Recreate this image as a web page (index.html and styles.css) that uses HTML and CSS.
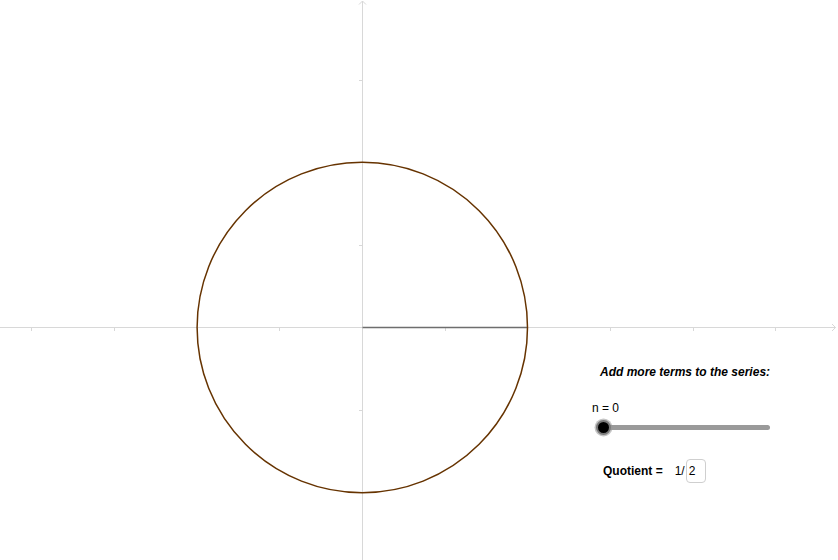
FILE: index.html
```html
<!DOCTYPE html>
<html>
<head>
<meta charset="utf-8">
<link rel="stylesheet" href="styles.css">
</head>
<body>
<div class="stage">
  <svg class="graph" width="838" height="560" viewBox="0 0 838 560" xmlns="http://www.w3.org/2000/svg">
    <g stroke="#d8d8d8" stroke-width="1" fill="none">
      <line x1="0" y1="327.5" x2="835.5" y2="327.5"/>
      <polyline points="832,324 835.5,327.5 832,331"/>
      <line x1="362.5" y1="1" x2="362.5" y2="560"/>
      <polyline points="359,4.5 362.5,1 366,4.5"/>
      <line x1="31.5" y1="327.5" x2="31.5" y2="331"/>
      <line x1="114.5" y1="327.5" x2="114.5" y2="331"/>
      <line x1="197.5" y1="327.5" x2="197.5" y2="331"/>
      <line x1="279.5" y1="327.5" x2="279.5" y2="331"/>
      <line x1="445.5" y1="327.5" x2="445.5" y2="331"/>
      <line x1="527.5" y1="327.5" x2="527.5" y2="331"/>
      <line x1="610.5" y1="327.5" x2="610.5" y2="331"/>
      <line x1="693.5" y1="327.5" x2="693.5" y2="331"/>
      <line x1="775.5" y1="327.5" x2="775.5" y2="331"/>
      <line x1="359" y1="80.5" x2="362.5" y2="80.5"/>
      <line x1="359" y1="162.5" x2="362.5" y2="162.5"/>
      <line x1="359" y1="245.5" x2="362.5" y2="245.5"/>
      <line x1="359" y1="410.5" x2="362.5" y2="410.5"/>
      <line x1="359" y1="492.5" x2="362.5" y2="492.5"/>
    </g>
    <line x1="362.5" y1="327.5" x2="527" y2="327.5" stroke="#6e6e6e" stroke-width="1.3"/>
    <circle cx="362.3" cy="327.5" r="165.2" fill="none" stroke="#663300" stroke-width="1.5"/>
  </svg>

  <div class="controls">
    <div class="title">Add more terms to the series:</div>
    <div class="nlabel">n = 0</div>
    <div class="slider">
      <div class="track"></div>
      <div class="knob"></div>
    </div>
    <div class="quotient">
      <span class="qlabel">Quotient =</span>
      <span class="frac">1/</span>
      <span class="inputbox">2</span>
    </div>
  </div>
</div>
</body>
</html>
```

FILE: styles.css
```css
html, body {
  margin: 0;
  padding: 0;
  background: #ffffff;
  overflow: hidden;
}

.stage {
  position: relative;
  width: 838px;
  height: 560px;
  font-family: "Liberation Sans", Arial, sans-serif;
  font-size: 12px;
  color: #000;
}

.graph {
  display: block;
}

.controls {
  position: absolute;
  left: 592px;
  top: 362px;
  width: 200px;
  display: flex;
  flex-direction: column;
}

.title {
  margin-left: 8px;
  line-height: 20px;
  height: 20px;
  font-weight: bold;
  font-style: italic;
  white-space: nowrap;
}

.nlabel {
  margin-top: 19px;
  line-height: 14px;
  height: 14px;
}

.slider {
  position: relative;
  margin-top: 3px;
  margin-left: 11px;
  width: 167px;
  height: 18px;
  display: flex;
  align-items: center;
}

.track {
  width: 100%;
  height: 5px;
  border-radius: 3px;
  background: #9a9a9a;
}

.knob {
  position: absolute;
  left: -9px;
  top: 0;
  width: 11px;
  height: 11px;
  border-radius: 50%;
  background: #000;
  border: 2.5px solid #7a7a7a;
  box-shadow: 0 0 0 1.5px rgba(150, 150, 150, 0.55);
  margin-top: 1.5px;
  margin-left: 1.5px;
  box-sizing: content-box;
}

.quotient {
  margin-top: 23px;
  margin-left: 11px;
  display: flex;
  align-items: center;
  height: 24px;
  line-height: 14px;
}

.qlabel {
  font-weight: bold;
  white-space: nowrap;
}

.frac {
  margin-left: 12px;
}

.inputbox {
  margin-left: 1px;
  width: 20px;
  height: 24px;
  box-sizing: border-box;
  border: 1px solid #cfcfcf;
  border-radius: 4px;
  padding-left: 2px;
  line-height: 22px;
}
```
